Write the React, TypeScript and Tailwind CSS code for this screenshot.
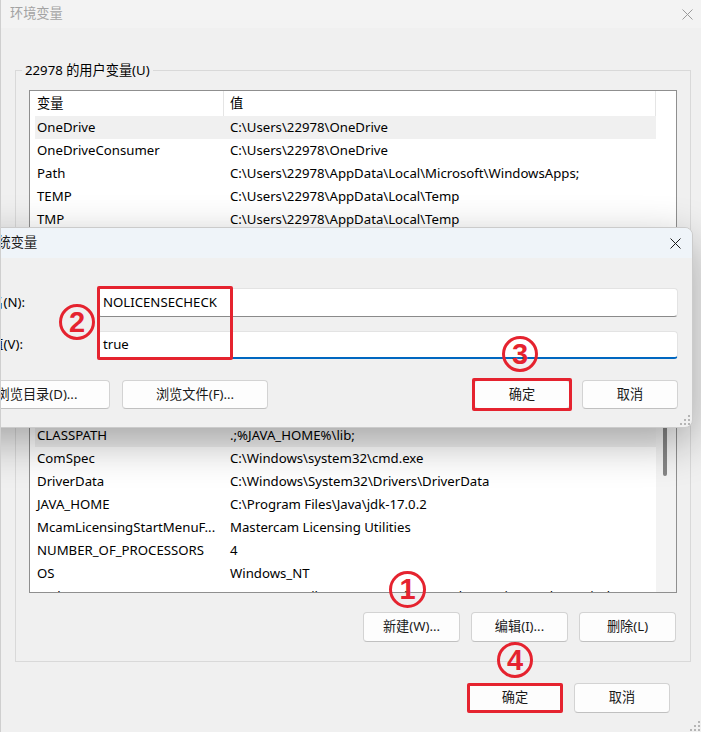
import React from "react";

type RowData = { name: string; value: string; selected?: boolean };

const userRows: RowData[] = [
  { name: "OneDrive", value: "C:\\Users\\22978\\OneDrive", selected: true },
  { name: "OneDriveConsumer", value: "C:\\Users\\22978\\OneDrive" },
  { name: "Path", value: "C:\\Users\\22978\\AppData\\Local\\Microsoft\\WindowsApps;" },
  { name: "TEMP", value: "C:\\Users\\22978\\AppData\\Local\\Temp" },
  { name: "TMP", value: "C:\\Users\\22978\\AppData\\Local\\Temp" },
];

const sysRows: RowData[] = [
  { name: "ACSetupSvcPort", value: "23210" },
  { name: "ACSvcPort", value: "17532" },
  { name: "CLASSPATH", value: ".;%JAVA_HOME%\\lib;", selected: true },
  { name: "ComSpec", value: "C:\\Windows\\system32\\cmd.exe" },
  { name: "DriverData", value: "C:\\Windows\\System32\\Drivers\\DriverData" },
  { name: "JAVA_HOME", value: "C:\\Program Files\\Java\\jdk-17.0.2" },
  { name: "McamLicensingStartMenuF...", value: "Mastercam Licensing Utilities" },
  { name: "NUMBER_OF_PROCESSORS", value: "4" },
  { name: "OS", value: "Windows_NT" },
  { name: "Path", value: "C:\\Program Files\\Common Files\\Oracle\\Java\\javapath;C:\\Windows\\system32;C:\\Windows;" },
];

function Row({ name, value, selected }: RowData) {
  return (
    <div
      className={
        selected
          ? "flex h-[23px] items-center whitespace-nowrap bg-[#f0f0f0] pt-[1px]"
          : "flex h-[23px] items-center whitespace-nowrap pt-[1px]"
      }
    >
      <div className="w-[188px] shrink-0 overflow-hidden pl-[2px]">{name}</div>
      <div className="min-w-0 flex-1 overflow-hidden pl-[7px]">{value}</div>
    </div>
  );
}

function VarList({ rows, sizeClass, scrollbar }: { rows: RowData[]; sizeClass: string; scrollbar?: boolean }) {
  return (
    <div className={`flex overflow-hidden border border-[#8f8f8f] bg-white ${sizeClass}`}>
      <div className="ml-[5px] w-[621px] shrink-0">
        <div className="flex h-[25px] items-stretch">
          <div className="flex w-[189px] shrink-0 items-center border-r border-[#e5e5e5] pl-[2px]">变量</div>
          <div className="flex flex-1 items-center border-r border-[#e5e5e5] pl-[6px]">值</div>
        </div>
        {rows.map((r) => (
          <Row key={r.name + r.value} {...r} />
        ))}
      </div>
      {scrollbar ? (
        <div className="flex-1 bg-[#f3f3f3] pl-[7px] pt-[28px]">
          <div className="h-[95px] w-[4px] rounded-full bg-[#858585]" />
        </div>
      ) : (
        <div className="flex-1" />
      )}
    </div>
  );
}

function Btn({ children, className = "" }: { children: React.ReactNode; className?: string }) {
  return (
    <div
      className={`relative flex shrink-0 items-center justify-center whitespace-nowrap rounded-[4px] border border-[#d3d3d3] border-b-[#c0c0c0] bg-[#fdfdfd] text-[#1a1a1a] ${className}`}
    >
      {children}
    </div>
  );
}

function CloseX({ color }: { color: string }) {
  return (
    <svg width="11" height="11" viewBox="0 0 11 11" fill="none">
      <path d="M0.5 0.5 L10.5 10.5 M10.5 0.5 L0.5 10.5" stroke={color} strokeWidth="1" />
    </svg>
  );
}

function Grip() {
  const dots: [number, number][] = [
    [8, 0],
    [4, 4],
    [8, 4],
    [0, 8],
    [4, 8],
    [8, 8],
  ];
  return (
    <svg width="10" height="10" viewBox="0 0 10 10">
      {dots.map(([x, y]) => (
        <rect key={`${x}-${y}`} x={x} y={y} width="2" height="2" fill="#b5b5b5" />
      ))}
    </svg>
  );
}

function Badge({ n, className }: { n: string; className: string }) {
  return (
    <div
      className={`absolute flex items-center justify-center rounded-full border-[3px] border-[#e5232f] bg-transparent font-['Liberation_Sans',sans-serif] text-[29px] font-bold leading-none text-[#e5232f] ${className}`}
    >
      {n}
    </div>
  );
}

export default function App() {
  return (
    <div className="relative h-[732px] w-[701px] overflow-hidden border-l border-[#cfcfcf] bg-[#f0f0f0] font-['Noto_Sans','Noto_Sans_CJK_SC',sans-serif] text-[13.2px] text-black">
      {/* main title bar */}
      <div className="flex h-[28px] items-center justify-between bg-[#f3f3f3] pl-[9px] pr-[8px]">
        <span className="text-[#a3a3a3]">环境变量</span>
        <CloseX color="#9a9a9a" />
      </div>

      <div className="pl-[14px] pr-[10px]">
        {/* user variables */}
        <div className="relative mt-[42px] border border-[#d9d9d9] px-[13px] pb-[19px] pt-[19px]">
          <div className="absolute -top-[10px] left-[6px] bg-[#f0f0f0] px-[3px] leading-[18px]">22978 的用户变量(U)</div>
          <VarList rows={userRows} sizeClass="h-[157px]" />
          <div className="mt-[19px] flex justify-end gap-[11px] pr-[1px]">
            <Btn className="h-[30px] w-[97px]">新建(N)...</Btn>
            <Btn className="h-[30px] w-[97px]">编辑(E)...</Btn>
            <Btn className="h-[30px] w-[97px]">删除(D)</Btn>
          </div>
        </div>

        {/* system variables */}
        <div className="relative mt-[16px] border border-[#d9d9d9] px-[13px] pb-[19px] pt-[19px]">
          <div className="absolute -top-[10px] left-[6px] bg-[#f0f0f0] px-[3px] leading-[18px]">系统变量(S)</div>
          <VarList rows={sysRows} sizeClass="h-[241px]" scrollbar />
          <div className="mt-[19px] flex justify-end gap-[11px] pr-[1px]">
            <Btn className="h-[30px] w-[97px]">新建(W)...</Btn>
            <Btn className="h-[30px] w-[97px]">编辑(I)...</Btn>
            <Btn className="h-[30px] w-[97px]">删除(L)</Btn>
          </div>
        </div>
      </div>

      {/* main buttons */}
      <div className="mt-[21px] flex justify-end gap-[11px] pr-[31px]">
        <Btn className="h-[30px] w-[96px]">
          确定
          <div className="absolute -inset-[1px] rounded-[2px] border-[3px] border-[#e5232f]" />
        </Btn>
        <Btn className="h-[30px] w-[96px]">取消</Btn>
      </div>
      <div className="absolute bottom-[1px] right-[1px]">
        <Grip />
      </div>

      {/* edit system variable dialog */}
      <div className="absolute left-[-49px] top-[227px] flex h-[201px] w-[741px] flex-col overflow-hidden rounded-[8px] border border-[#cbcbcb] bg-[#f0f0f0] shadow-[0_14px_44px_rgba(0,0,0,0.32)]">
        <div className="flex h-[30px] shrink-0 items-center justify-between bg-[#eff4f9] pl-[5px] pr-[11px]">
          <span className="text-[#1a1a1a]">编辑系统变量</span>
          <CloseX color="#1a1a1a" />
        </div>
        <div className="pl-[11px] pr-[14px] pt-[30px]">
          <div className="flex h-[29px] items-center">
            <div className="w-[133px] shrink-0 whitespace-nowrap">变量名(N):</div>
            <div className="flex h-full flex-1 items-center rounded-[4px] border border-[#e3e3e3] border-b-[#8a8a8a] bg-white pl-[5px]">
              NOLICENSECHECK
            </div>
          </div>
          <div className="mt-[14px] flex h-[28px] items-center">
            <div className="w-[133px] shrink-0 whitespace-nowrap">变量值(V):</div>
            <div className="flex h-full flex-1 items-center rounded-[4px] border border-[#e3e3e3] border-b-2 border-b-[#0067c0] bg-white pl-[5px]">
              true
            </div>
          </div>
          <div className="mt-[21px] flex items-center justify-between">
            <div className="flex gap-[12px]">
              <Btn className="h-[29px] w-[146px]">浏览目录(D)...</Btn>
              <Btn className="h-[29px] w-[146px]">浏览文件(F)...</Btn>
            </div>
            <div className="flex gap-[12px]">
              <Btn className="h-[29px] w-[96px]">
                确定
                <div className="absolute -inset-[3px] rounded-[2px] border-[3px] border-[#e5232f]" />
              </Btn>
              <Btn className="h-[29px] w-[96px]">取消</Btn>
            </div>
          </div>
        </div>
        <div className="absolute bottom-[2px] right-[2px]">
          <Grip />
        </div>
      </div>

      {/* annotations */}
      <div className="absolute left-[96px] top-[286px] h-[74px] w-[136px] rounded-[2px] border-[3px] border-[#e5232f]" />
      <Badge n="1" className="left-[388px] top-[571px] h-[37px] w-[37px]" />
      <Badge n="2" className="left-[58px] top-[304px] h-[36px] w-[36px]" />
      <Badge n="3" className="left-[501px] top-[336px] h-[36px] w-[36px]" />
      <Badge n="4" className="left-[496px] top-[642px] h-[36px] w-[36px]" />
    </div>
  );
}
